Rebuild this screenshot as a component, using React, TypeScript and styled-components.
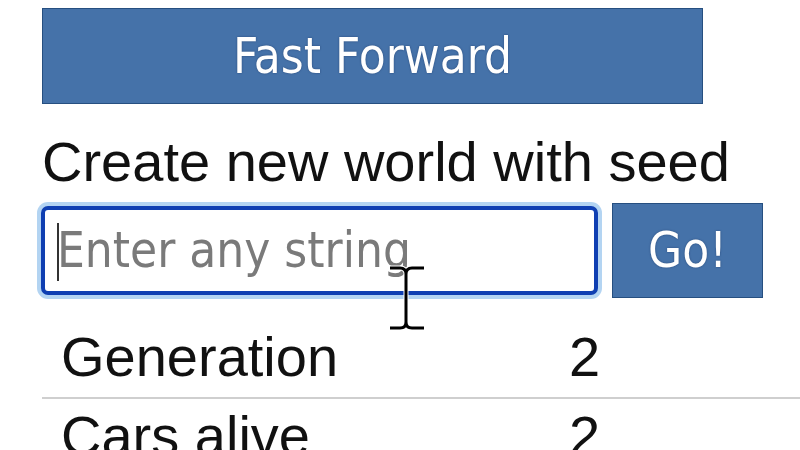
import React from "react";
import styled, { createGlobalStyle } from "styled-components";

const GlobalStyle = createGlobalStyle`
  html, body {
    margin: 0;
    padding: 0;
    background: #ffffff;
    overflow: hidden;
  }
  body {
    width: 800px;
    height: 450px;
  }
`;

const tahomaLike = `"DejaVu Sans Condensed", "DejaVu Sans", Verdana, sans-serif`;

const Page = styled.div`
  position: relative;
  width: 800px;
  height: 450px;
  overflow: hidden;
  box-sizing: border-box;
  padding: 8px 0 0 42px;
  display: flex;
  flex-direction: column;
  align-items: flex-start;
`;

const BlueButton = styled.button<{ $w: number; $h: number }>`
  box-sizing: border-box;
  width: ${(p) => p.$w}px;
  height: ${(p) => p.$h}px;
  margin: 0;
  padding: 0;
  background: #4572a9;
  border: 1px solid #264f80;
  border-radius: 0;
  color: #ffffff;
  font-family: ${tahomaLike};
  font-stretch: condensed;
  font-size: 49px;
  line-height: 1;
  text-shadow: 0 0 2px rgba(10, 30, 70, 0.5);
  display: flex;
  align-items: center;
  justify-content: center;
  cursor: pointer;
  flex: none;
`;

const Label = styled.div`
  margin-top: 26px;
  font-family: "Liberation Sans", Arial, sans-serif;
  font-size: 56px;
  line-height: 64px;
  color: #111111;
  white-space: nowrap;
`;

const SeedRow = styled.div`
  margin-top: 9px;
  height: 95px;
  display: flex;
  align-items: center;
  gap: 14px;
`;

const InputWrap = styled.div`
  position: relative;
  margin-left: -1px;
`;

const SeedInput = styled.input`
  box-sizing: border-box;
  width: 557px;
  height: 89px;
  margin: 0;
  padding: 0 0 0 12px;
  border: 4px solid #0f3fb2;
  border-radius: 7px;
  box-shadow: 0 0 0 4px #b3d4f2;
  outline: none;
  background: #ffffff;
  font-family: ${tahomaLike};
  font-stretch: condensed;
  font-size: 49px;
  color: #222;
  &::placeholder {
    color: #7a7a7a;
    opacity: 1;
  }
`;

const Caret = styled.span`
  position: absolute;
  left: 16px;
  top: 17px;
  width: 2px;
  height: 58px;
  background: #333333;
  pointer-events: none;
`;

const Stats = styled.div`
  margin-top: 22px;
  width: 800px;
  display: flex;
  flex-direction: column;
`;

const StatRow = styled.div`
  display: grid;
  grid-template-columns: 508px 1fr;
  padding: 5px 0 8px 19px;
  border-bottom: 2px solid #cfcfcf;
  font-family: "Liberation Sans", Arial, sans-serif;
  font-size: 56px;
  line-height: 64px;
  color: #111111;
  white-space: nowrap;
`;

const Cell = styled.span``;

const Pointer = styled.svg`
  position: absolute;
  left: 388px;
  top: 265px;
  pointer-events: none;
`;

const stats: [string, string][] = [
  ["Generation", "2"],
  ["Cars alive", "2"],
];

export default function App() {
  return (
    <>
      <GlobalStyle />
      <Page>
        <BlueButton $w={661} $h={96}>Fast Forward</BlueButton>
        <Label>Create new world with seed</Label>
        <SeedRow>
          <InputWrap>
            <SeedInput placeholder="Enter any string" />
            <Caret />
          </InputWrap>
          <BlueButton $w={151} $h={95}>Go!</BlueButton>
        </SeedRow>
        <Stats>
          {stats.map(([k, v]) => (
            <StatRow key={k}>
              <Cell>{k}</Cell>
              <Cell>{v}</Cell>
            </StatRow>
          ))}
        </Stats>
        <Pointer width="38" height="68" viewBox="0 0 38 68">
          <path
            d="M2 3 H12 Q18 3 18 9 Q18 3 24 3 H36 M18 9 V57 M2 63 H12 Q18 63 18 57 Q18 63 24 63 H36"
            fill="none"
            stroke="#ffffff"
            strokeWidth="5"
            strokeLinecap="square"
          />
          <path
            d="M2 3 H12 Q18 3 18 9 Q18 3 24 3 H36 M18 9 V57 M2 63 H12 Q18 63 18 57 Q18 63 24 63 H36"
            fill="none"
            stroke="#000000"
            strokeWidth="3"
          />
        </Pointer>
      </Page>
    </>
  );
}
